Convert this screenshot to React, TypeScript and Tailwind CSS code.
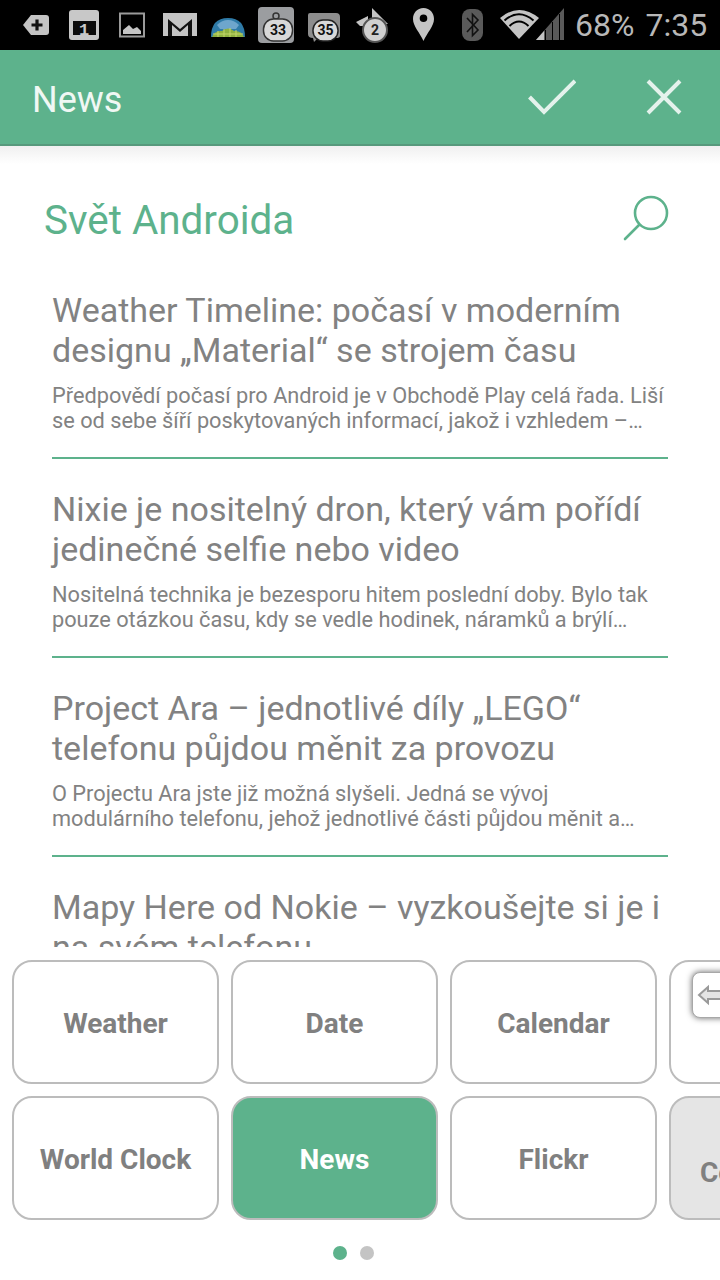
import React from "react";

const articles = [
  {
    t: ["Weather Timeline: počasí v moderním", "designu „Material“ se strojem času"],
    d: ["Předpovědí počasí pro Android je v Obchodě Play celá řada. Liší", "se od sebe šíří poskytovaných informací, jakož i vzhledem –…"],
  },
  {
    t: ["Nixie je nositelný dron, který vám pořídí", "jedinečné selfie nebo video"],
    d: ["Nositelná technika je bezesporu hitem poslední doby. Bylo tak", "pouze otázkou času, kdy se vedle hodinek, náramků a brýlí…"],
  },
  {
    t: ["Project Ara – jednotlivé díly „LEGO“", "telefonu půjdou měnit za provozu"],
    d: ["O Projectu Ara jste již možná slyšeli. Jedná se vývoj", "modulárního telefonu, jehož jednotlivé části půjdou měnit a…"],
  },
];

function StatusIcons() {
  return (
    <svg width="570" height="50" viewBox="0 0 570 50" className="shrink-0">
      {/* plus tag */}
      <path d="M23 25 L31 15 H46 Q49 15 49 18 V32 Q49 35 46 35 H31 Z" fill="#c4c4c4" />
      <path d="M37 19.5 V30.5 M31.5 25 H42.5" stroke="#111" strokeWidth="3.2" />
      {/* calendar */}
      <rect x="69" y="10" width="30" height="30" rx="3" fill="#c8c8c8" />
      <rect x="73" y="21" width="23" height="14" fill="#0c0c0c" />
      <text x="84" y="35" fontSize="17" fontWeight="700" textAnchor="middle" fill="#c8c8c8" fontFamily="'Liberation Mono', monospace">1</text>
      {/* image */}
      <rect x="120" y="13.5" width="24" height="23" fill="none" stroke="#9a9a9a" strokeWidth="2" />
      <path d="M123 34 V30 L129 25 L133 29 L137 27 L141 31 V34 Z" fill="#c4c4c4" />
      {/* gmail */}
      <rect x="163" y="13" width="34" height="23" fill="#c4c4c4" />
      <path d="M168 36 V19 L180 29 L192 19 V36 H188 V25 L180 32 L172 25 V36 Z" fill="#111" />
      {/* globe */}
      <path d="M211 37 Q211 18 228 18 Q245 18 245 37 Z" fill="#2f7ba8" />
      <path d="M217 25 Q222 20 228 20 Q234 20 239 25 L236 29 H220 Z" fill="#6ea6cc" />
      <path d="M212 37 Q215 30 222 31 Q228 26 234 31 Q241 30 244 37 Z" fill="#8fb140" />
      <path d="M218 31 V37 M224 29 V37 M230 28 V37 M236 30 V37 M213 34 H243" stroke="#c4d46a" strokeWidth="1" />
      {/* 33 */}
      <rect x="258" y="7" width="36" height="36" rx="4" fill="#9b9da0" />
      <circle cx="276" cy="16" r="3" fill="none" stroke="#333" strokeWidth="1.5" />
      <rect x="263.5" y="19" width="29" height="22" rx="10" fill="#d8d8d8" stroke="#333" strokeWidth="1.5" />
      <text x="278" y="35" fontSize="14" fontWeight="700" textAnchor="middle" fill="#111" fontFamily="Roboto, sans-serif">33</text>
      {/* 35 */}
      <path d="M310 13 H336 Q340 13 340 17 V36 Q340 38 336 38 H318 L314 42 L313 38 Q308 38 308 34 V15 Q308 13 310 13 Z" fill="#8d8d8d" />
      <rect x="313" y="20" width="25" height="21" rx="10" fill="#d8d8d8" stroke="#222" strokeWidth="1.5" />
      <text x="325.5" y="35" fontSize="14" fontWeight="700" textAnchor="middle" fill="#111" fontFamily="Roboto, sans-serif">35</text>
      {/* arrows + 2 */}
      <path d="M372 8 L388 24 L372 24 Z M356 22 L368 16 V26 H360 Z" fill="#c4c4c4" />
      <circle cx="375" cy="30" r="12" fill="#d0d0d0" stroke="#555" strokeWidth="2" />
      <text x="375" y="35" fontSize="14" fontWeight="700" textAnchor="middle" fill="#222" fontFamily="Roboto, sans-serif">2</text>
      {/* pin */}
      <path fillRule="evenodd" d="M423.5 8 C417 8 413 13 413 19 C413 26 420 33 423.5 41 C427 33 434 26 434 19 C434 13 430 8 423.5 8 Z M423.5 14.5 A3.8 3.8 0 1 1 423.5 22.1 A3.8 3.8 0 1 1 423.5 14.5 Z" fill="#c4c4c4" />
      {/* bluetooth */}
      <rect x="462" y="9" width="21" height="32" rx="8" fill="#5a5a5a" />
      <path d="M467 18 L478 30 L472.5 35.5 V14.5 L478 20 L467 32" fill="none" stroke="#111" strokeWidth="1.6" />
      {/* wifi */}
      <path d="M500 18 Q519 2 539 18 L519 39 Z" fill="#c4c4c4" />
      <path d="M504.5 20.5 Q519 8 533.5 20.5 M509.5 26 Q519 17 528.5 26" fill="none" stroke="#000" strokeWidth="2" />
      {/* signal */}
      <path d="M536 40 L564 8 V40 Z" fill="#5a5a5a" />
      <path d="M536 40 L544 31 V40 Z" fill="#c4c4c4" />
      <path d="M545.5 30 V40 M552.5 22 V40 M559.5 14 V40" stroke="#000" strokeWidth="1" />
    </svg>
  );
}

function Card({ label, active }: { label: string; active?: boolean }) {
  return (
    <div
      className={
        active
          ? "w-[207px] h-[124px] shrink-0 rounded-[20px] border-2 border-[#bcbcbc] bg-[#5db28c] flex items-center justify-center pt-[4px] text-[28px] font-bold text-white"
          : "w-[207px] h-[124px] shrink-0 rounded-[20px] border-2 border-[#bcbcbc] bg-white flex items-center justify-center pt-[4px] text-[28px] font-bold text-[#808080]"
      }
    >
      {label}
    </div>
  );
}

export default function App() {
  return (
    <div className="w-[720px] h-[1280px] overflow-hidden bg-white flex flex-col font-['Roboto',sans-serif]">
      <div className="h-[50px] shrink-0 bg-black flex items-center">
        <StatusIcons />
        <span className="ml-[5px] text-[32px] leading-none text-[#b8b8b8] whitespace-nowrap">68%</span>
        <span className="ml-[11px] text-[32px] leading-none text-[#b8b8b8] whitespace-nowrap">7:35</span>
      </div>

      <div className="h-[96px] shrink-0 bg-[#5db28c] border-b-2 border-[#57997c] flex items-center pl-[32px]">
        <span className="text-[36px] text-[#f0f8f4] flex-1 mt-[6px]">News</span>
        <svg width="48" height="38" viewBox="0 0 48 38" className="mr-[70px]">
          <path d="M1.5 19 L16 34 L47 3" fill="none" stroke="#e4f2ec" strokeWidth="4" />
        </svg>
        <svg width="36" height="36" viewBox="0 0 36 36" className="mr-[38px]">
          <path d="M2 2 L34 34 M34 2 L2 34" fill="none" stroke="#e4f2ec" strokeWidth="4" />
        </svg>
      </div>
      <div className="h-[18px] shrink-0 bg-gradient-to-b from-[#f0f0f0] to-white" />

      <div className="h-[783px] shrink-0 overflow-hidden">
        <div className="flex items-center justify-between pl-[44px] pr-[50px] h-[84px] pt-[30px]">
          <span className="text-[40.4px] text-[#5db28c] leading-none">Svět Androida</span>
          <svg width="48" height="46" viewBox="0 0 48 46" className="-mt-[6px]">
            <circle cx="29" cy="18" r="16" fill="none" stroke="#5db28c" strokeWidth="2.6" />
            <path d="M17 30 L3 44" fill="none" stroke="#5db28c" strokeWidth="2.6" strokeLinecap="round" />
          </svg>
        </div>
        <div className="pl-[52px] pr-[52px] flex flex-col pt-[12px]">
          {articles.map((a) => (
            <div key={a.t[0]} className="h-[199px] border-b-2 border-[#5db28c] pt-[30px] text-[#828282] whitespace-nowrap">
              <div className="text-[34px] leading-[40px]">
                {a.t.map((l) => (
                  <div key={l}>{l}</div>
                ))}
              </div>
              <div className="text-[21.75px] leading-[25px] mt-[13px]">
                {a.d.map((l) => (
                  <div key={l}>{l}</div>
                ))}
              </div>
            </div>
          ))}
          <div className="pt-[30px] text-[34px] leading-[40px] text-[#828282] whitespace-nowrap">
            <div>Mapy Here od Nokie – vyzkoušejte si je i</div>
            <div>na svém telefonu</div>
          </div>
        </div>
      </div>

      <div className="pt-[13px] pl-[12px] flex flex-col gap-[12px]">
        <div className="flex gap-[12px]">
          <Card label="Weather" />
          <Card label="Date" />
          <Card label="Calendar" />
          <div className="w-[207px] h-[124px] shrink-0 rounded-[20px] border-2 border-[#bcbcbc] bg-white relative">
            <div className="absolute left-[21px] top-[10px] w-[60px] h-[46px] rounded-[8px] border border-[#a8a8a8] bg-white shadow-[0_0_6px_#666] flex items-center pl-[4px]">
              <svg width="26" height="22" viewBox="0 0 26 22">
                <path d="M2 11 L11 3 V7 H26 V15 H11 V19 Z" fill="#e4e4e4" stroke="#9a9a9a" strokeWidth="2" />
              </svg>
            </div>
          </div>
        </div>
        <div className="flex gap-[12px]">
          <Card label="World Clock" />
          <Card label="News" active />
          <Card label="Flickr" />
          <div className="w-[207px] h-[124px] shrink-0 rounded-[20px] border-2 border-[#bcbcbc] bg-[#e5e5e5] pt-[54px] pl-[29px] text-[28px] font-bold text-[#808080] whitespace-nowrap">
            Contacts
          </div>
        </div>
      </div>

      <div className="flex justify-center items-center gap-[13px] mt-[26px] pr-[14px]">
        <div className="w-[14px] h-[14px] rounded-full bg-[#5db28c]" />
        <div className="w-[14px] h-[14px] rounded-full bg-[#c4c4c4]" />
      </div>
    </div>
  );
}
